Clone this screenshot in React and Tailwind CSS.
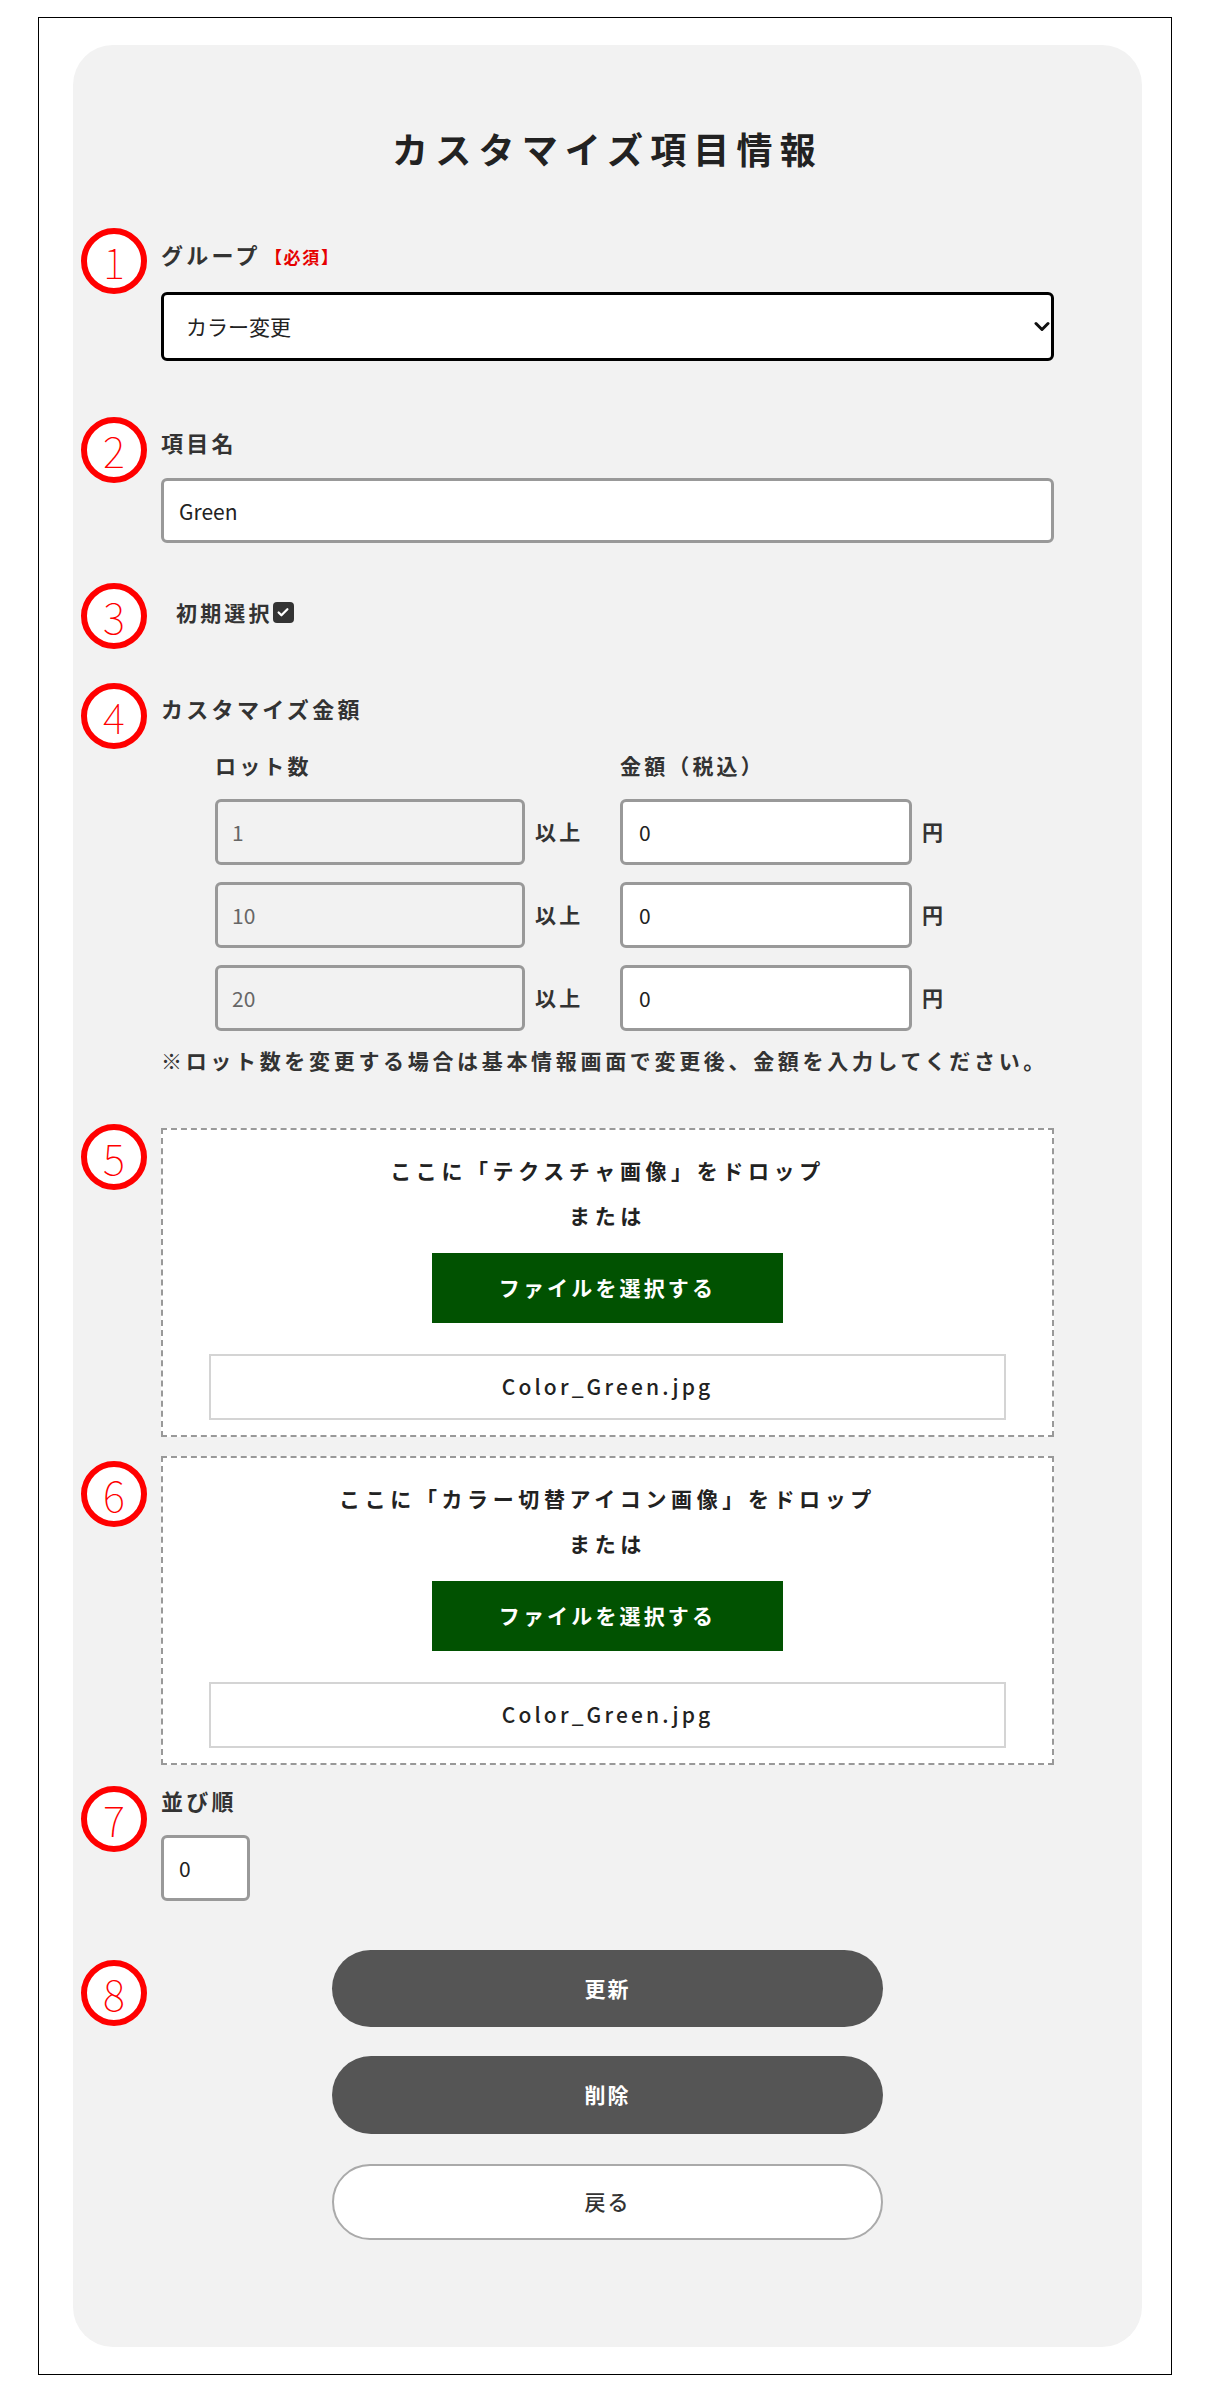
import React from 'react'

function Mark({ n, top }) {
  return (
    <div
      className={`absolute left-[-80px] w-[66px] h-[66px] rounded-full border-[6px] border-[#ff0000] bg-white flex items-center justify-center text-[#ff0000] text-[42px] font-thin leading-none ${top}`}
    >
      {n}
    </div>
  )
}

function DropBox({ label }) {
  return (
    <div className="h-[309px] border-2 border-dashed border-[#999] bg-white pt-[25px] flex flex-col items-center">
      <p className="text-[21px] leading-[30px] font-bold tracking-[0.22em] text-[#222]">{label}</p>
      <p className="mt-[15px] text-[21px] leading-[30px] font-bold tracking-[0.22em] text-[#222]">または</p>
      <button className="mt-[23px] w-[351px] h-[70px] bg-[#015201] text-white text-[21px] font-bold tracking-[0.15em]">
        ファイルを選択する
      </button>
      <div className="mt-[31px] w-[797px] h-[66px] border-2 border-[#d4d4d4] bg-white flex items-center justify-center text-[21px] font-medium tracking-[0.15em] text-[#222]">
        Color_Green.jpg
      </div>
    </div>
  )
}

export default function App() {
  const lots = ['1', '10', '20']

  return (
    <div className="min-h-screen bg-white pt-[17px] pb-[14px] px-[38px] font-['Noto_Sans_CJK_JP','Noto_Sans',sans-serif] text-[#333]">
      <div className="border border-black pt-[27px] pb-[27px] pl-[34px] pr-[29px]">
        <div className="bg-[#f2f2f2] rounded-[40px] px-[88px] pt-[76px] pb-[107px]">
          {/* Title */}
          <h1 className="text-center text-[36px] leading-[54px] font-bold tracking-[0.2em] text-[#222]">
            カスタマイズ項目情報
          </h1>

          {/* 1 group */}
          <div className="relative mt-[64px]">
            <Mark n="1" top="top-[-11px]" />
            <label className="block text-[22px] leading-[30px] font-bold tracking-[0.15em]">
              グループ<span className="ml-[4px] text-[17px] text-[#e60000] tracking-[0.1em]">【必須】</span>
            </label>
            <div className="relative mt-[20px]">
              <select
                defaultValue="color"
                className="appearance-none w-full h-[69px] border-[3px] border-black rounded-[6px] bg-white pl-[22px] text-[21px] text-[#222] outline-none"
              >
                <option value="color">カラー変更</option>
              </select>
              <svg className="absolute right-[4px] top-[29px] w-[16px] h-[11px]" viewBox="0 0 16 11" fill="none">
                <path d="M2 2.5l6 6 6-6" stroke="#111" strokeWidth="3" strokeLinecap="round" strokeLinejoin="round" />
              </svg>
            </div>
          </div>

          {/* 2 name */}
          <div className="relative mt-[66px]">
            <Mark n="2" top="top-[-10px]" />
            <label className="block text-[22px] leading-[30px] font-bold tracking-[0.15em]">項目名</label>
            <input
              defaultValue="Green"
              className="mt-[21px] w-full h-[65px] border-[3px] border-[#999] rounded-[6px] bg-white pl-[15px] text-[21px] text-[#222] outline-none"
            />
          </div>

          {/* 3 default */}
          <div className="relative mt-[54px]">
            <Mark n="3" top="top-[-14px]" />
            <div className="flex items-center pl-[15px] text-[21px] leading-[30px] font-bold tracking-[0.15em]">
              <span>初期選択</span>
              <span className="w-[21px] h-[21px] rounded-[4px] bg-[#333] flex items-center justify-center">
                <svg viewBox="0 0 16 16" className="w-[14px] h-[14px]" fill="none">
                  <path d="M3 8.5l3.2 3.2L13 4.8" stroke="#fff" strokeWidth="2.6" strokeLinecap="round" strokeLinejoin="round" />
                </svg>
              </span>
            </div>
          </div>

          {/* 4 price */}
          <div className="relative mt-[66px]">
            <Mark n="4" top="top-[-10px]" />
            <label className="block text-[22px] leading-[30px] font-bold tracking-[0.15em]">カスタマイズ金額</label>
            <div className="pl-[54px] mt-[27px] grid grid-cols-[310px_95px_292px_auto] gap-y-[17px] items-center text-[21px] font-bold tracking-[0.15em]">
              <div className="leading-[30px] mb-[2px]">ロット数</div>
              <div />
              <div className="leading-[30px] mb-[2px]">金額（税込）</div>
              <div />
              {lots.map(lot => (
                <React.Fragment key={lot}>
                  <input
                    defaultValue={lot}
                    readOnly
                    className="h-[66px] border-[3px] border-[#999] rounded-[6px] bg-[#f2f2f2] pl-[14px] text-[21px] font-normal tracking-normal text-[#666] outline-none"
                  />
                  <span className="pl-[10px]">以上</span>
                  <input
                    defaultValue="0"
                    className="h-[66px] border-[3px] border-[#999] rounded-[6px] bg-white pl-[16px] text-[21px] font-normal tracking-normal text-[#222] outline-none"
                  />
                  <span className="pl-[10px]">円</span>
                </React.Fragment>
              ))}
            </div>
            <p className="mt-[14px] text-[21px] leading-[30px] font-bold tracking-[0.175em]">
              ※ロット数を変更する場合は基本情報画面で変更後、金額を入力してください。
            </p>
          </div>

          {/* 5 texture */}
          <div className="relative mt-[53px]">
            <Mark n="5" top="top-[-4px]" />
            <DropBox label="ここに「テクスチャ画像」をドロップ" />
          </div>

          {/* 6 icon */}
          <div className="relative mt-[19px]">
            <Mark n="6" top="top-[5px]" />
            <DropBox label="ここに「カラー切替アイコン画像」をドロップ" />
          </div>

          {/* 7 order */}
          <div className="relative mt-[20px]">
            <Mark n="7" top="top-[1px]" />
            <label className="block text-[22px] leading-[30px] font-bold tracking-[0.15em]">並び順</label>
            <input
              defaultValue="0"
              className="mt-[20px] w-[89px] h-[66px] border-[3px] border-[#999] rounded-[6px] bg-white pl-[15px] text-[21px] text-[#222] outline-none"
            />
          </div>

          {/* 8 buttons */}
          <div className="relative mt-[49px] flex flex-col items-center">
            <Mark n="8" top="top-[10px]" />
            <button className="w-[551px] h-[77px] rounded-full bg-[#555] text-white text-[21px] font-bold tracking-[0.1em]">更新</button>
            <button className="mt-[29px] w-[551px] h-[78px] rounded-full bg-[#555] text-white text-[21px] font-bold tracking-[0.1em]">削除</button>
            <button className="mt-[30px] w-[551px] h-[76px] rounded-full bg-white border-2 border-[#aaa] text-[#333] text-[21px] font-medium tracking-[0.1em]">戻る</button>
          </div>
        </div>
      </div>
    </div>
  )
}
